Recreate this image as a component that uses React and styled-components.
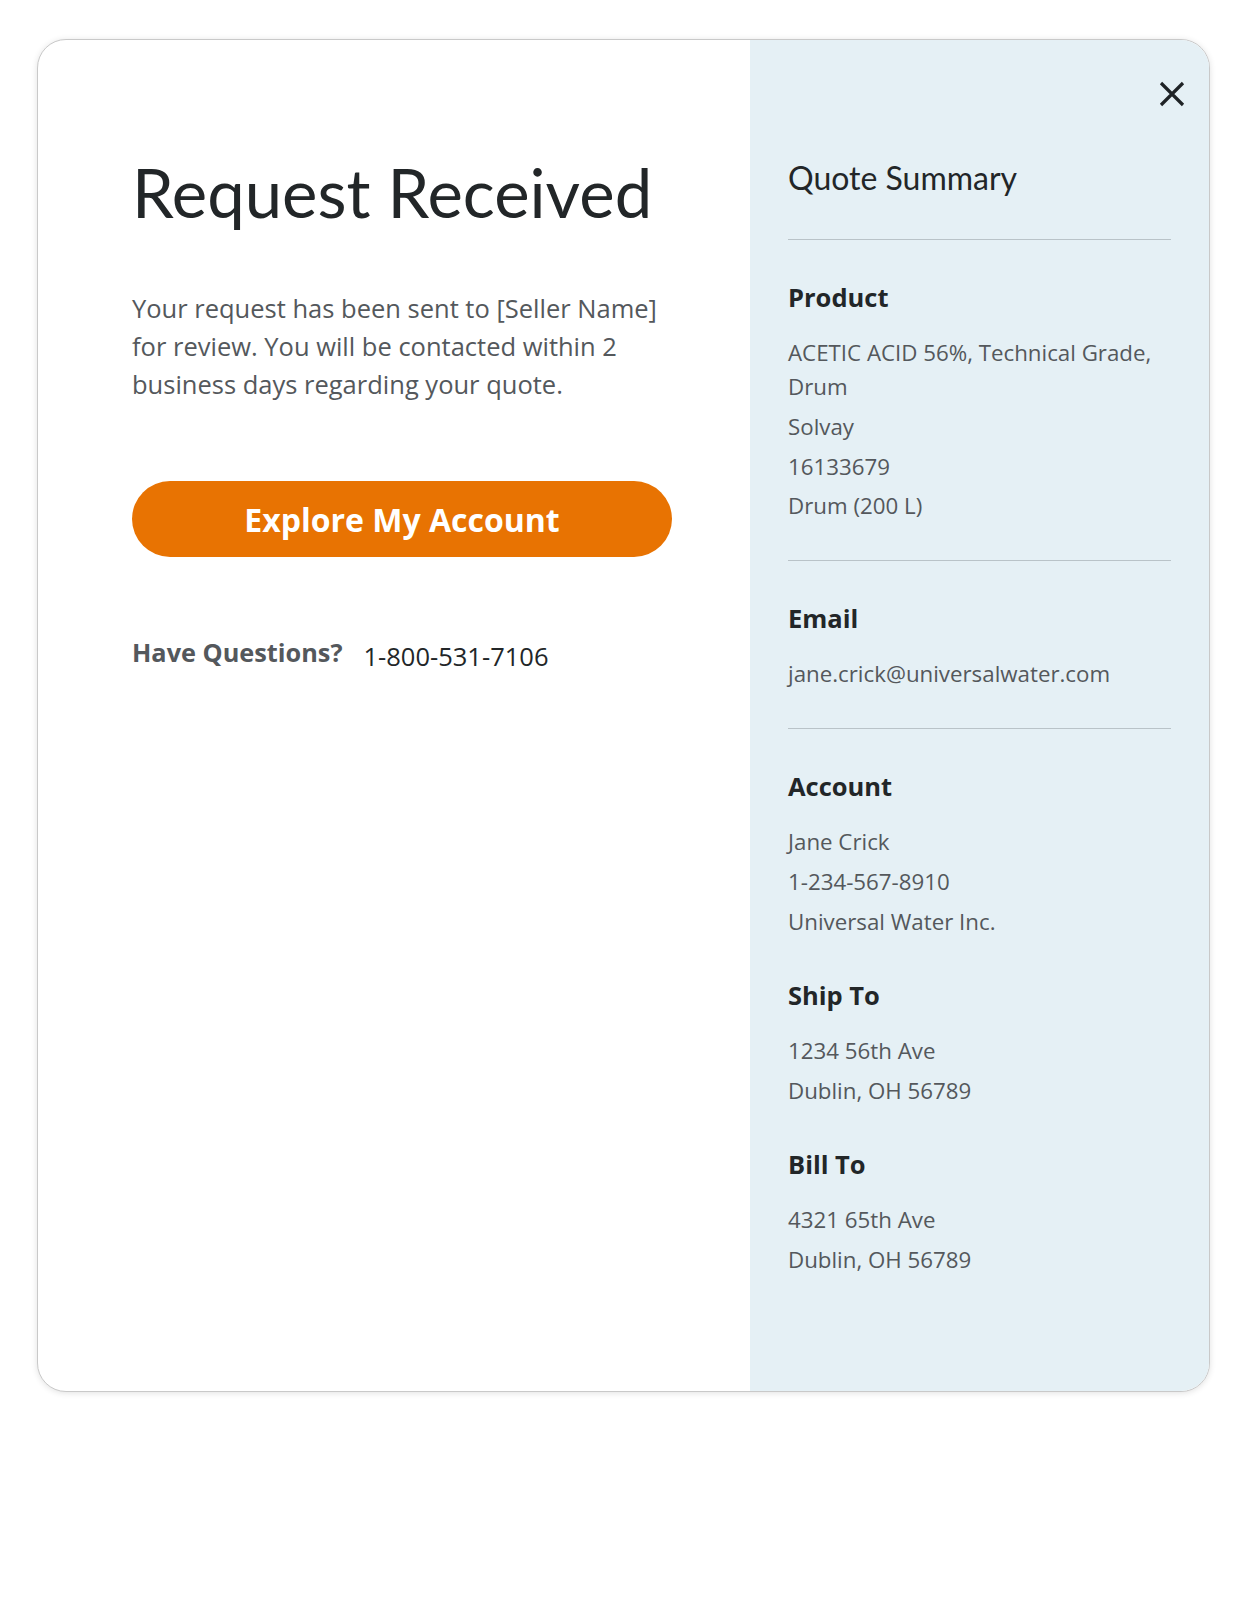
import React from "react";
import styled, { createGlobalStyle } from "styled-components";

const Global = createGlobalStyle`
  html, body { margin: 0; padding: 0; background: #fff; }
  body { font-family: "Open Sans", "Liberation Sans", sans-serif; }
  * { box-sizing: border-box; }
`;

const Page = styled.div`
  width: 1247px;
  min-height: 1604px;
  padding: 39px 0 0 37px;
`;

const Card = styled.div`
  width: 1173px;
  height: 1353px;
  display: grid;
  grid-template-columns: 712px 1fr;
  border: 1px solid #c9c9c9;
  border-radius: 29px;
  overflow: hidden;
  box-shadow: 0 1px 6px rgba(0, 0, 0, 0.12);
  background: #fff;
`;

const Main = styled.section`
  padding: 112px 40px 0 94px;
  display: flex;
  flex-direction: column;
  align-items: flex-start;
`;

const Title = styled.h1`
  margin: 0;
  font-family: Lato, "Open Sans", sans-serif;
  font-weight: 400;
  font-size: 67px;
  line-height: 80px;
  color: #222628;
`;

const Lead = styled.p`
  margin: 56.5px 0 0;
  font-size: 25.5px;
  line-height: 38.4px;
  color: #54585c;
  max-width: 560px;
`;

const PrimaryButton = styled.button`
  margin-top: 77.5px;
  width: 540px;
  height: 76px;
  border: none;
  border-radius: 38px;
  background: #e87302;
  color: #fff;
  font-family: "Open Sans", sans-serif;
  font-weight: 700;
  font-size: 32px;
  cursor: pointer;
`;

const HelpRow = styled.div`
  margin-top: 78px;
  display: flex;
  align-items: baseline;
  gap: 21px;
`;

const HelpLabel = styled.span`
  font-weight: 700;
  font-size: 25.3px;
  color: #54585c;
`;

const Phone = styled.span`
  font-size: 25.5px;
  color: #222628;
  position: relative;
  top: 4px;
`;

const Aside = styled.aside`
  position: relative;
  background: #e5f0f5;
  padding: 118px 38px 0 38px;
`;

const Close = styled.button`
  position: absolute;
  top: 39px;
  right: 22px;
  width: 30px;
  height: 30px;
  padding: 0;
  border: none;
  background: transparent;
  cursor: pointer;
  display: flex;
  align-items: center;
  justify-content: center;
`;

const SummaryTitle = styled.h2`
  margin: 0;
  font-family: Lato, "Open Sans", sans-serif;
  font-weight: 400;
  font-size: 32px;
  line-height: 40px;
  color: #222628;
  padding-bottom: 41px;
  border-bottom: 1px solid #b9c3c8;
`;

const Section = styled.div`
  padding: ${(p) => (p.$divider || p.$afterDivider ? "39px" : "38px")} 0
    ${(p) => (p.$divider ? "37px" : "0")};
  border-bottom: ${(p) => (p.$divider ? "1px solid #b9c3c8" : "none")};
`;

const Heading = styled.h3`
  margin: 0 0 21px;
  font-weight: 700;
  font-size: 25.5px;
  line-height: 36px;
  color: #222628;
`;

const Item = styled.div`
  font-size: 22.3px;
  line-height: 34px;
  color: #54585c;
  margin-top: 5.8px;
  &:first-of-type {
    margin-top: 0;
  }
`;

function CloseIcon() {
  return (
    <svg width="26" height="26" viewBox="0 0 26 26" fill="none">
      <path d="M2 2 L24 24 M24 2 L2 24" stroke="#1f2326" strokeWidth="3.2" strokeLinecap="butt" />
    </svg>
  );
}

export default function App() {
  return (
    <>
      <Global />
      <Page>
        <Card>
          <Main>
            <Title>Request Received</Title>
            <Lead>
              Your request has been sent to [Seller Name] for review. You will be contacted within 2
              business days regarding your quote.
            </Lead>
            <PrimaryButton>Explore My Account</PrimaryButton>
            <HelpRow>
              <HelpLabel>Have Questions?</HelpLabel>
              <Phone>1-800-531-7106</Phone>
            </HelpRow>
          </Main>
          <Aside>
            <Close aria-label="Close">
              <CloseIcon />
            </Close>
            <SummaryTitle>Quote Summary</SummaryTitle>
            <Section $divider>
              <Heading>Product</Heading>
              <Item>ACETIC ACID 56%, Technical Grade, Drum</Item>
              <Item>Solvay</Item>
              <Item>16133679</Item>
              <Item>Drum (200 L)</Item>
            </Section>
            <Section $divider>
              <Heading>Email</Heading>
              <Item>jane.crick@universalwater.com</Item>
            </Section>
            <Section $afterDivider>
              <Heading>Account</Heading>
              <Item>Jane Crick</Item>
              <Item>1-234-567-8910</Item>
              <Item>Universal Water Inc.</Item>
            </Section>
            <Section>
              <Heading>Ship To</Heading>
              <Item>1234 56th Ave</Item>
              <Item>Dublin, OH 56789</Item>
            </Section>
            <Section>
              <Heading>Bill To</Heading>
              <Item>4321 65th Ave</Item>
              <Item>Dublin, OH 56789</Item>
            </Section>
          </Aside>
        </Card>
      </Page>
    </>
  );
}
